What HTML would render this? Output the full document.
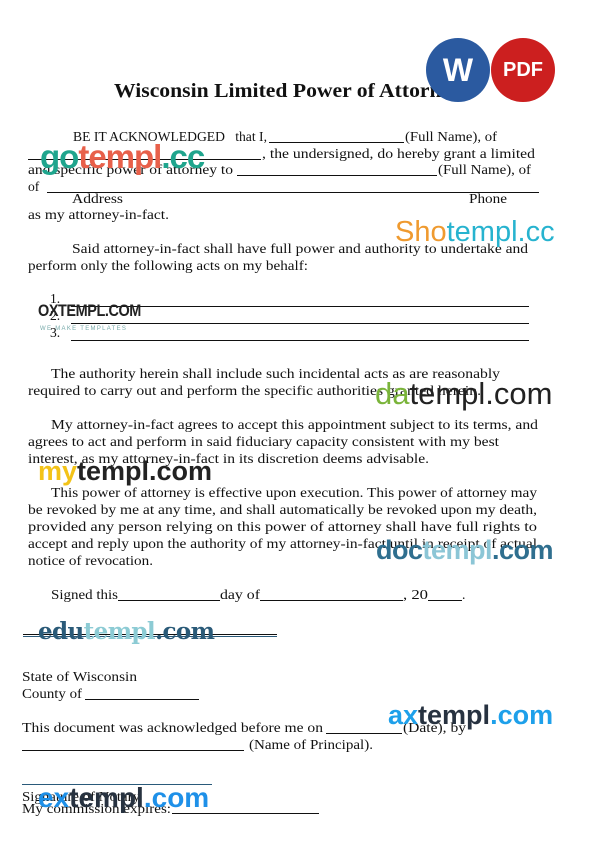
<!DOCTYPE html>
<html><head><meta charset="utf-8"><style>
body{margin:0;width:597px;height:855px;background:#fff;position:relative;overflow:hidden;font-family:"Liberation Serif",serif;color:#111}
.t{position:absolute;font-size:13.6px;line-height:16px;white-space:nowrap;transform-origin:0 50%}
.l{position:absolute;height:1px;background:#111}
.w{position:absolute;font-family:"Liberation Sans","DejaVu Sans",sans-serif;white-space:nowrap;line-height:1}
</style></head><body>
<div class="t" style="left:114px;top:79px;font-size:20px;line-height:24px;font-weight:bold" data-r="462">Wisconsin Limited Power of Attorney</div>

<div style="position:absolute;left:426px;top:38px;width:64px;height:64px;border-radius:50%;background:#2b5aa0;color:#fff;font:bold 32px 'Liberation Sans',sans-serif;text-align:center;line-height:64px">W</div>
<div style="position:absolute;left:491px;top:38px;width:64px;height:64px;border-radius:50%;background:#cc1f1f;color:#fff;font:bold 20px 'Liberation Sans',sans-serif;text-align:center;line-height:64px">PDF</div>

<div class="t" style="left:73px;top:129px" data-r="267">BE IT ACKNOWLEDGED&nbsp;&nbsp; that I,</div>
<div class="l" style="left:269px;top:142px;width:135px"></div>
<div class="t" style="left:405px;top:129px" data-r="497">(Full Name), of</div>
<div class="l" style="left:28px;top:159px;width:233px"></div>
<div class="t" style="left:262px;top:146px" data-r="535">, the undersigned, do hereby grant a limited</div>
<div class="t" style="left:28px;top:162px" data-r="233">and specific power of attorney to</div>
<div class="l" style="left:237px;top:175px;width:200px"></div>
<div class="t" style="left:438px;top:162px" data-r="531">(Full Name), of</div>
<div class="t" style="left:28px;top:179px">of</div>
<div class="l" style="left:47px;top:192px;width:492px"></div>
<div class="t" style="left:72px;top:191px" data-r="123">Address</div>
<div class="t" style="left:469px;top:191px" data-r="507">Phone</div>
<div class="t" style="left:28px;top:207px" data-r="169">as my attorney-in-fact.</div>

<div class="t" style="left:72px;top:241px" data-r="528">Said attorney-in-fact shall have full power and authority to undertake and</div>
<div class="t" style="left:28px;top:258px" data-r="308">perform only the following acts on my behalf:</div>

<div class="t" style="left:50px;top:291px">1.</div>
<div class="t" style="left:50px;top:308px">2.</div>
<div class="t" style="left:50px;top:325px">3.</div>
<div class="l" style="left:71px;top:306px;width:458px"></div>
<div class="l" style="left:71px;top:323px;width:458px"></div>
<div class="l" style="left:71px;top:340px;width:458px"></div>

<div class="t" style="left:51px;top:366px" data-r="500">The authority herein shall include such incidental acts as are reasonably</div>
<div class="t" style="left:28px;top:383px" data-r="481">required to carry out and perform the specific authorities granted herein.</div>

<div class="t" style="left:51px;top:417px" data-r="538">My attorney-in-fact agrees to accept this appointment subject to its terms, and</div>
<div class="t" style="left:28px;top:434px" data-r="499">agrees to act and perform in said fiduciary capacity consistent with my best</div>
<div class="t" style="left:28px;top:451px" data-r="429">interest, as my attorney-in-fact in its discretion deems advisable.</div>

<div class="t" style="left:51px;top:485px" data-r="537">This power of attorney is effective upon execution. This power of attorney may</div>
<div class="t" style="left:28px;top:502px" data-r="537">be revoked by me at any time, and shall automatically be revoked upon my death,</div>
<div class="t" style="left:28px;top:519px" data-r="537">provided any person relying on this power of attorney shall have full rights to</div>
<div class="t" style="left:28px;top:536px" data-r="537">accept and reply upon the authority of my attorney-in-fact until in receipt of actual</div>
<div class="t" style="left:28px;top:553px" data-r="153">notice of revocation.</div>

<div class="t" style="left:51px;top:587px" data-r="118">Signed this</div>
<div class="l" style="left:118px;top:600px;width:102px"></div>
<div class="t" style="left:220px;top:587px" data-r="260">day of</div>
<div class="l" style="left:260px;top:600px;width:143px"></div>
<div class="t" style="left:403px;top:587px" data-r="428">, 20</div>
<div class="l" style="left:428px;top:600px;width:34px"></div>
<div class="t" style="left:462px;top:587px">.</div>

<div class="l" style="left:23px;top:634px;width:254px"></div>
<div class="l" style="left:23px;top:636px;width:254px;background:#2a5a7a"></div>

<div class="t" style="left:22px;top:669px" data-r="137">State of Wisconsin</div>
<div class="t" style="left:22px;top:686px" data-r="82">County of</div>
<div class="l" style="left:85px;top:699px;width:114px"></div>

<div class="t" style="left:22px;top:720px" data-r="323">This document was acknowledged before me on</div>
<div class="l" style="left:326px;top:733px;width:76px"></div>
<div class="t" style="left:403px;top:720px" data-r="466">(Date), by</div>
<div class="l" style="left:22px;top:750px;width:222px"></div>
<div class="t" style="left:249px;top:737px" data-r="373">(Name of Principal).</div>

<div class="l" style="left:22px;top:784px;width:190px;background:#2a5a7a"></div>
<div class="t" style="left:22px;top:789px" data-r="140">Signature of Notary</div>
<div class="t" style="left:22px;top:801px" data-r="171">My commission expires:</div>
<div class="l" style="left:172px;top:813px;width:147px"></div>

<!-- watermarks -->
<div class="w" style="left:40px;top:140px;font-size:33px;font-weight:bold;letter-spacing:-1px"><span style="color:#1fa58d">go</span><span style="color:#e8604a">templ</span><span style="color:#1fa58d">.cc</span></div>
<div class="w" style="left:395px;top:218px;font-size:29px"><span style="color:#ef9a2f">Sho</span><span style="color:#27b3cf">templ.cc</span></div>
<div class="w" style="left:38px;top:302px;font-size:17px;font-weight:bold;color:#222;letter-spacing:-0.5px;transform:scaleX(0.85);transform-origin:0 0">OXTEMPL.COM</div>
<div class="w" style="left:40px;top:326px;font-size:6px;color:#7aa;letter-spacing:1.3px">WE MAKE TEMPLATES</div>
<div class="w" style="left:375px;top:378px;font-size:31px"><span style="color:#7ab43a">da</span><span style="color:#222">templ.com</span></div>
<div class="w" style="left:38px;top:458px;font-size:27px;font-weight:bold"><span style="color:#f3c318">my</span><span style="color:#222">templ.com</span></div>
<div class="w" style="left:376px;top:537px;font-size:27px;font-weight:bold;letter-spacing:-0.5px"><span style="color:#2f6f8f">doc</span><span style="color:#8cc6d6">templ</span><span style="color:#2f6f8f">.com</span></div>
<div class="w" style="left:38px;top:620px;font-size:23px;font-weight:bold;font-family:'DejaVu Serif',serif;letter-spacing:-0.6px"><span style="color:#2a5a78">edu</span><span style="color:#8ccbd4">templ</span><span style="color:#2a5a78">.com</span></div>
<div class="w" style="left:388px;top:702px;font-size:27px;font-weight:bold"><span style="color:#1ea0ea">ax</span><span style="color:#273240">templ</span><span style="color:#1ea0ea">.com</span></div>
<div class="w" style="left:38px;top:784px;font-size:28px;font-weight:bold"><span style="color:#1e90e8">ex</span><span style="color:#273240">templ</span><span style="color:#1e90e8">.com</span></div>
<script>
document.querySelectorAll('.t[data-r]').forEach(function(e){
  var l=parseFloat(e.style.left),r=parseFloat(e.getAttribute('data-r'));
  var w=e.getBoundingClientRect().width;
  if(w>0){e.style.transform='scaleX('+((r-l)/w)+')';}
});
</script>
</body></html>
